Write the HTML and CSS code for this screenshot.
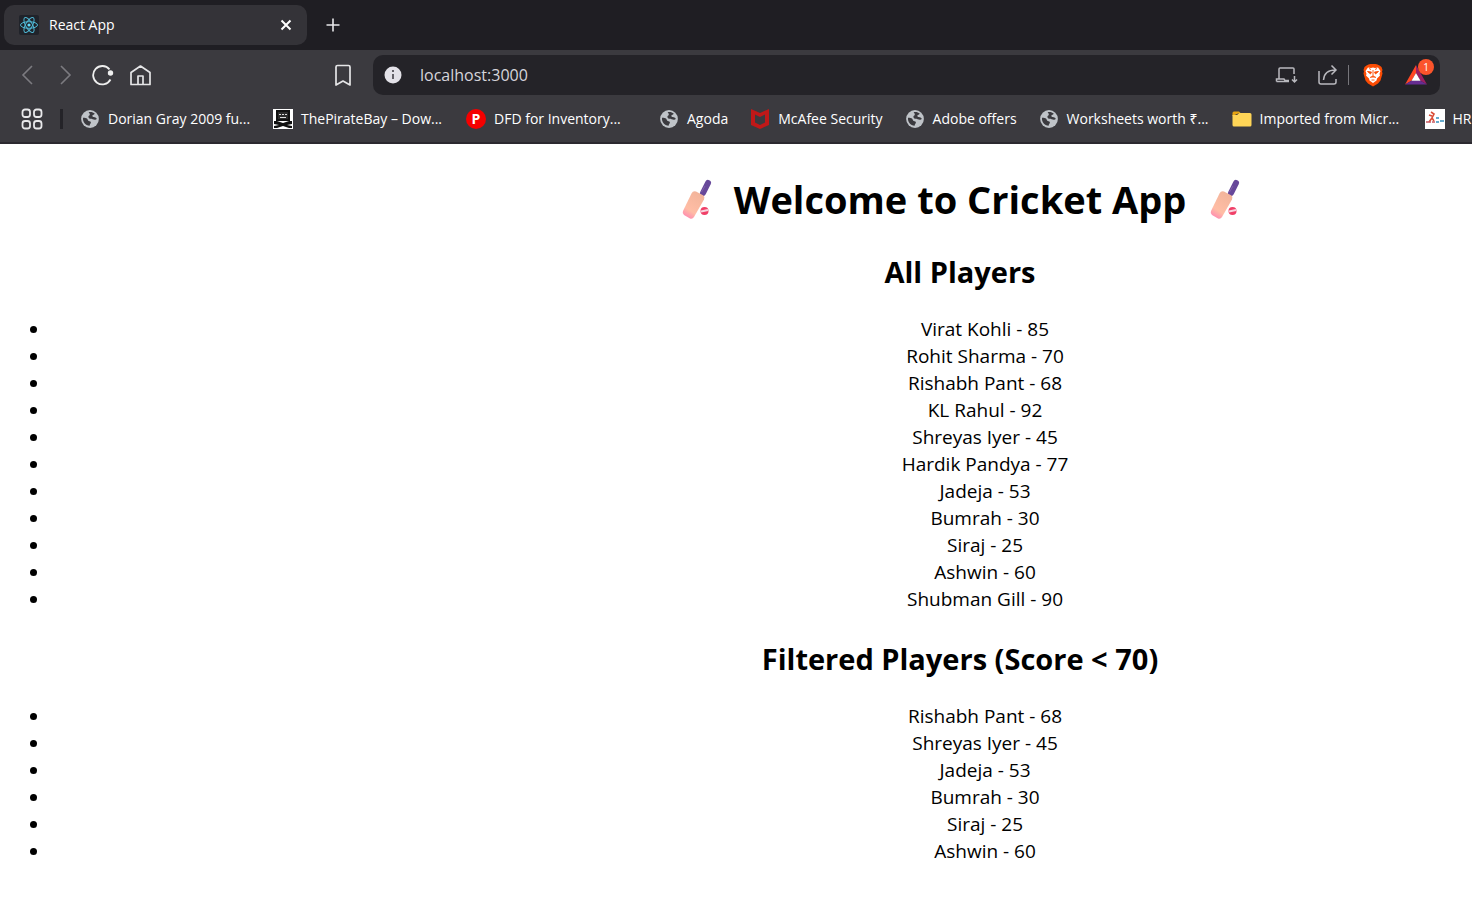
FILE: index.html
```html
<!DOCTYPE html>
<html lang="en">
<head>
<meta charset="utf-8">
<title>React App</title>
<link rel="stylesheet" href="styles.css">
</head>
<body>
<svg class="defs" aria-hidden="true">
  <symbol id="globe" viewBox="0 0 20 20">
    <circle cx="10" cy="10" r="8.900" fill="#bfc3c8"/>
    <path d="M3 8.800c1.800.1 3.500.2 4.200.9.900.8.300 1.800 1.500 2.200 1.200.4 2.100.4 2.200 1.400.1 1.200-1 1.600-1.300 3.500C5.500 16.500 2.500 13 3 8.800ZM8.600 3.300c2.100-.6 4.600-.1 6.200 1.400-.5 1.100-2 .8-2.400 1.800-.3.900.4 1.400 1.400 1.600 1.200.2 2.300.6 3 1.600-.7 1.300-2.700 1.200-4 .6-1.400-.6-2-.1-3.400-.9-1.300-.8-1.300-2.300-.1-2.900.9-.5.6-2-.7-3.200Z" fill="#3b3a3f"/>
  </symbol>
  <symbol id="bat" viewBox="0 0 40 44">
    <linearGradient id="wood" x1=".7" y1="0" x2=".2" y2="1"><stop offset="0" stop-color="#f2b49a"/><stop offset=".7" stop-color="#ffbda5"/><stop offset="1" stop-color="#ff86b2"/></linearGradient>
    <path d="M27 16 32 6" stroke="#67489a" stroke-width="6" stroke-linecap="round"/>
    <path d="M25.500 15 29 9" stroke="#8060a8" stroke-width="1"/>
    <path d="m20 14.500 7.500 4q1.500 1.500.5 4L18 40q-1.500 2.500-4 1.500l-6-3.500q-2-1.500-1-4l8.500-17.500q1.500-3 4.500-2Z" fill="url(#wood)"/>
    <circle cx="28.500" cy="34" r="4" fill="#f04068"/>
    <path d="m25 34.500 7-1.500" stroke="#f7d5df" stroke-width="2"/>
  </symbol>
</svg>

<header class="browser">
  <div class="tabs">
    <div class="tab">
      <svg class="icon20" viewBox="0 0 20 20"><rect width="20" height="20" rx="2" fill="#20232a"/><g fill="none" stroke="#4fb9d6" stroke-width="1"><ellipse cx="10" cy="10" rx="8.500" ry="3.300"/><ellipse cx="10" cy="10" rx="8.500" ry="3.300" transform="rotate(60 10 10)"/><ellipse cx="10" cy="10" rx="8.500" ry="3.300" transform="rotate(120 10 10)"/></g><circle cx="10" cy="10" r="1.600" fill="#61dafb"/></svg>
      <span class="tab-title">React App</span>
      <button class="plain" aria-label="Close tab"><svg class="icon20" viewBox="0 0 20 20"><path d="m5.500 5.500 9 9m0-9-9 9" stroke="#fff" stroke-width="2"/></svg></button>
    </div>
    <button class="plain" aria-label="New tab"><svg class="icon20" viewBox="0 0 20 20"><path d="M10 3.500v13M3.500 10h13" stroke="#e8e8ea" stroke-width="1.600"/></svg></button>
  </div>

  <nav class="toolbar" aria-label="Navigation">
    <div class="nav-buttons">
      <button class="plain" aria-label="Back"><svg class="icon24" viewBox="0 0 24 24"><path d="m16 3-9 9 9 9" fill="none" stroke="#7c7b80" stroke-width="1.600"/></svg></button>
      <button class="plain" aria-label="Forward"><svg class="icon24" viewBox="0 0 24 24"><path d="m7 3 9 9-9 9" fill="none" stroke="#7c7b80" stroke-width="1.600"/></svg></button>
      <button class="plain" aria-label="Reload"><svg class="icon24" viewBox="0 0 24 24"><path d="M17.500 6.400A9.200 9.200 0 1 0 18.500 16.500" fill="none" stroke="#eee" stroke-width="1.800"/><circle cx="18.500" cy="10" r="2.700" fill="#eee"/></svg></button>
      <button class="plain" aria-label="Home"><svg class="icon24" viewBox="0 0 24 24"><path d="M1 9.500 10.500 3 20 9.500V21.500H1ZM8 21.500v-8.500h5v8.500" fill="none" stroke="#e5e5e7" stroke-width="1.700" stroke-linejoin="round"/></svg></button>
    </div>
    <button class="plain" aria-label="Bookmark"><svg class="icon24" viewBox="0 0 24 24"><path d="M6.500 2.500h11q1.500 0 1.500 1.500v18l-7-4-7 4V4q0-1.500 1.500-1.500Z" fill="none" stroke="#e5e5e7" stroke-width="1.700" stroke-linejoin="round"/></svg></button>
    <div class="address">
      <svg class="icon18" viewBox="0 0 18 18"><circle cx="9" cy="9" r="8.500" fill="#e3e2e8"/><path d="M9 4v2M9 8v5" stroke="#55545a" stroke-width="1.800"/></svg>
      <input class="url" type="text" value="localhost:3000" aria-label="Address">
      <div class="address-actions">
        <button class="plain" aria-label="Install app"><svg class="icon24" viewBox="0 0 24 24"><path d="M5 15.500V6q0-1 1-1h13q1 0 1 1v5M2.500 18.500V16H10l1 1.500h4M2.500 18.500H15M20.500 13v5.500m-2.500-2 2.500 2.500 2.500-2.500" fill="none" stroke="#b9b9be" stroke-width="1.500"/></svg></button>
        <button class="plain" aria-label="Share"><svg class="icon24" viewBox="0 0 24 24"><path d="M3 8v11q0 2 2 2h13q2 0 2-2v-3M7.500 17C8 10 12 7 19.500 7M15.500 2.500 20 7l-4.500 4.500" fill="none" stroke="#b9b9be" stroke-width="1.500"/></svg></button>
      </div>
      <span class="address-rule"></span>
      <button class="plain" aria-label="Brave Shields"><svg class="icon24" viewBox="0 0 24 24"><path d="m7.500 1.500 2-.5h5l2 .5 2 1 2 1.500 1 3-.5 1.500.5 2-2 7-2.500 3-5 3-5-3-2.500-3-2-7 .5-2L2.500 7l1-3 2-1.500Z" fill="#fb4c04"/><path d="m7 4.500 3 .5 2-.5 2 .5 3-.5 2.500 3.500-1 3 .5 1.500-3 3-.5 2-3.500 2.500-3.500-2.500-.5-2-3-3L5.500 11l-1-3Z" fill="#fff"/><path d="m6.500 8.500 4 .5-1 2Zm11 0-4 .5 1 2ZM12 7v6m-3 1.500 3-1.500 3 1.500m-4.500 2.500h3M8.500 5l1 2m6-2-1 2" fill="#fb4c04" stroke="#fb4c04" stroke-width=".9"/></svg></button>
      <button class="plain rewards" aria-label="Brave Rewards"><svg class="icon24" viewBox="0 0 24 24"><path d="M12 2 1 21.500 7.800 17.500 12 10Z" fill="#ff4724"/><path d="m12 2 11 19.500-6.800-4L12 10Z" fill="#9e1f63"/><path d="M1 21.500h22l-6.800-4H7.800Z" fill="#662d91"/><path d="m12 10 4.500 7.700h-9Z" fill="#fff"/></svg><span class="badge">1</span></button>
    </div>
  </nav>

  <nav class="bookmarks" aria-label="Bookmarks">
    <button class="plain" aria-label="All bookmarks"><svg class="icon24" viewBox="0 0 24 24"><g fill="none" stroke="#e8e8ea" stroke-width="1.800"><rect x="2.500" y="2.500" width="7.500" height="7.500" rx="2.500"/><rect x="14" y="2.500" width="7.500" height="7.500" rx="2.500"/><rect x="2.500" y="14" width="7.500" height="7.500" rx="2.500"/><rect x="14" y="14" width="7.500" height="7.500" rx="2.500"/></g></svg></button>
    <span class="bookmark-rule"></span>
    <a class="bookmark long" href="#"><svg class="icon20"><use href="#globe"/></svg>Dorian Gray 2009 fu...</a>
    <a class="bookmark long" href="#"><svg class="icon20" viewBox="0 0 20 20"><path fill="#fff" d="M0 0h20v20H0z"/><path d="M3 1h14v11H3zM1 12h3l6 2 6-2h3v3l-5 1 5 1v2h-3l-6-2-6 2H1v-2l5-1-5-1Z" fill="#111"/><path d="M5 3h10v7H5z" fill="#2b2b2b"/><path d="M6 5h2v1H6zm3 0h2v1H9zm3 0h2v1h-2zM7 8h6v1H7z" fill="#ddd"/></svg>ThePirateBay – Dow...</a>
    <a class="bookmark long" href="#"><span class="p-logo">P</span>DFD for Inventory...</a>
    <a class="bookmark" href="#"><svg class="icon20"><use href="#globe"/></svg>Agoda</a>
    <a class="bookmark" href="#"><svg class="icon20" viewBox="0 0 20 20"><path d="m1 0 9 4 9-4v16l-9 4-9-4Zm4 5.500v8l5 2.500 5-2.500v-8l-5 2.500Z" fill="#c01818" fill-rule="evenodd"/></svg>McAfee Security</a>
    <a class="bookmark" href="#"><svg class="icon20"><use href="#globe"/></svg>Adobe offers</a>
    <a class="bookmark long" href="#"><svg class="icon20"><use href="#globe"/></svg>Worksheets worth ₹...</a>
    <a class="bookmark long" href="#"><svg class="icon20" viewBox="0 0 20 20"><path d="M.5 4q0-1.500 1.500-1.500h5L9 4.500H6L.5 7Z" fill="#e8a512"/><path d="M.5 6 5 6l2.500-2H18q1.500 0 1.500 1.500V16q0 1.500-1.500 1.500H2Q.5 17.500.5 16Z" fill="#ffd557"/></svg>Imported from Micr...</a>
    <a class="bookmark" href="#"><svg class="icon20" viewBox="0 0 20 20"><path fill="#fff" d="M0 0h20v20H0z"/><path d="m6 3 3 2-2 4 2 3M7 7 4 6m3 3-3 4" stroke="#d94d37" stroke-width="1.600" fill="none"/><path d="M1 13h5m1 0h3" stroke="#c75b64" stroke-width="1.500"/><path d="M11 9h3m1 3h4m-8 1h3" stroke="#3590bd" stroke-width="1.500"/></svg>HRI</a>
  </nav>
</header>

<div class="viewport">
  <main class="page">
    <h1 class="title"><svg class="bat" role="img" aria-label="Cricket bat"><use href="#bat"/></svg>Welcome to Cricket App<svg class="bat" role="img" aria-label="Cricket bat"><use href="#bat"/></svg></h1>
    <h2 class="subtitle">All Players</h2>
    <ul class="players">
      <li>Virat Kohli - 85</li>
      <li>Rohit Sharma - 70</li>
      <li>Rishabh Pant - 68</li>
      <li>KL Rahul - 92</li>
      <li>Shreyas Iyer - 45</li>
      <li>Hardik Pandya - 77</li>
      <li>Jadeja - 53</li>
      <li>Bumrah - 30</li>
      <li>Siraj - 25</li>
      <li>Ashwin - 60</li>
      <li>Shubman Gill - 90</li>
    </ul>
    <h2 class="subtitle">Filtered Players (Score &lt; 70)</h2>
    <ul class="players">
      <li>Rishabh Pant - 68</li>
      <li>Shreyas Iyer - 45</li>
      <li>Jadeja - 53</li>
      <li>Bumrah - 30</li>
      <li>Siraj - 25</li>
      <li>Ashwin - 60</li>
    </ul>
  </main>
</div>
</body>
</html>
```
FILE: styles.css
```css
* { box-sizing: border-box; }
body { margin: 0; background: #fff; color: #000; font-family: "Open Sans", "Noto Sans", sans-serif; overflow-x: hidden; }
.defs { position: absolute; width: 0; height: 0; }
.icon18 { width: 18px; height: 18px; flex: none; }
.icon20 { width: 20px; height: 20px; flex: none; }
.icon24 { width: 24px; height: 24px; flex: none; }
.plain { display: flex; padding: 0; border: 0; background: none; flex: none; }

.browser { background: #3b3a3f; color: #fff; font-size: 14px; line-height: 20px; border-bottom: 2px solid #2b292f; overflow: hidden; }
.tabs { display: flex; align-items: center; gap: 16px; height: 50px; padding: 0 4px; background: #1f1e23; }
.tab { display: flex; align-items: center; gap: 10px; width: 303px; height: 40px; padding: 0 11px 0 15px; border-radius: 10px; background: #343338; }
.tab-title { flex: 1; }

.toolbar { display: flex; align-items: center; gap: 18px; height: 50px; padding: 0 32px 0 16px; }
.nav-buttons { display: flex; gap: 14px; width: 297px; }
.address { display: flex; align-items: center; flex: 1; height: 40px; padding: 0 12px 0 11px; border-radius: 10px; background: #242328; }
.url { flex: 1; min-width: 0; margin-left: 18px; padding: 0; border: 0; outline: 0; background: none; color: #d6d5db; font: 16px/24px "Open Sans", sans-serif; }
.address-actions { display: flex; gap: 18px; }
.address-rule { width: 1px; height: 20px; margin: 0 12px 0 8px; background: #77767b; }
.rewards { position: relative; margin-left: 19px; }
.badge { position: absolute; top: -4px; right: -6px; width: 16px; height: 16px; border-radius: 50%; background: #fb542b; color: #fff; font: 10px/16px "Open Sans", sans-serif; text-align: center; }

.bookmarks { display: flex; align-items: center; gap: 22px; height: 42px; padding: 0 0 4px 20px; white-space: nowrap; }
.bookmark-rule { width: 3px; height: 20px; margin: 0 -5px 0 -6px; background: #242328; flex: none; }
.bookmark { display: flex; align-items: center; gap: 8px; flex: none; color: #fff; text-decoration: none; }
.long { width: 171px; }
.p-logo { width: 20px; height: 20px; border-radius: 50%; background: #f50000; font-weight: 700; text-align: center; }

.viewport { overflow: hidden; }
.page { min-width: 1920px; padding: 28px 0 40px; text-align: center; }
.title { display: flex; justify-content: center; align-items: center; gap: 18px; margin: 0; font-size: 38px; line-height: 54px; }
.bat { width: 40px; height: 44px; }
.subtitle { margin: 26px 0 24px; font-size: 29px; line-height: 40px; }
.players { margin: 0; padding-left: 50px; font-size: 19px; line-height: 27px; }
```
